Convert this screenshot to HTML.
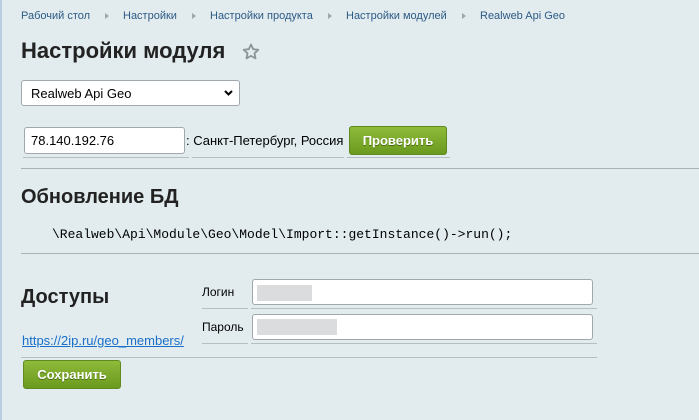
<!DOCTYPE html>
<html><head><meta charset="utf-8"><style>
body{margin:0;width:699px;height:420px;background:#e2ecef;font-family:"Liberation Sans",sans-serif;position:relative;overflow:hidden;color:#000}
.a{position:absolute}
.bc{top:10px;font-size:11px;color:#2c5a85}
.sep{top:13px;width:0;height:0;border-left:4px solid #9aa;border-top:3px solid transparent;border-bottom:3px solid transparent}
h1{position:absolute;margin:0;font-size:22px;font-weight:bold;color:#222}
.inp{background:#fff;border:1px solid #a0a8ad;border-radius:3px;box-sizing:border-box}
.btn{background:linear-gradient(#8fba3a,#6a9a1e);border:1px solid #5f8a1f;border-radius:3px;color:#fff;font-weight:bold;font-size:13px;text-align:center;box-sizing:border-box;text-shadow:0 1px 0 #4a6a10}
.hl{height:1px;background:#b5bfc3}
.blur{background:#dadcdd}
</style></head><body>
<div class="a" style="left:0;top:0;width:2px;height:420px;background:#b8cde0"></div>
<div class="a bc" style="left:21px">Рабочий стол</div><div class="a sep" style="left:105px"></div>
<div class="a bc" style="left:123px">Настройки</div><div class="a sep" style="left:192px"></div>
<div class="a bc" style="left:210px">Настройки продукта</div><div class="a sep" style="left:328px"></div>
<div class="a bc" style="left:346px">Настройки модулей</div><div class="a sep" style="left:462px"></div>
<div class="a bc" style="left:480px">Realweb Api Geo</div>
<h1 style="left:21px;top:38px">Настройки модуля</h1>
<svg class="a" style="left:242px;top:43px" width="18" height="18" viewBox="0 0 18 18"><path d="M9 1.5l2.2 4.7 5.1.6-3.8 3.5 1 5.1L9 12.9l-4.5 2.5 1-5.1L1.7 6.8l5.1-.6z" fill="none" stroke="#8a9499" stroke-width="1.8" stroke-linejoin="round"/></svg>
<div class="a inp" style="left:21px;top:80px;width:219px;height:26px;font-size:13px;padding:5px 9px">Realweb Api Geo<svg style="position:absolute;right:6px;top:9px" width="9" height="6" viewBox="0 0 9 6"><path d="M1 1l3.5 3.5L8 1" fill="none" stroke="#000" stroke-width="2"/></svg></div>
<div class="a inp" style="left:24px;top:127px;width:161px;height:27px;font-size:13px;padding:5px 6px">78.140.192.76</div>
<div class="a" style="left:186px;top:133px;font-size:13px">: Санкт-Петербург, Россия</div>
<div class="a btn" style="left:349px;top:126px;width:98px;height:29px;line-height:27px">Проверить</div>
<div class="a hl" style="left:23px;top:157px;width:166px"></div>
<div class="a hl" style="left:192px;top:157px;width:152px"></div>
<div class="a hl" style="left:347px;top:157px;width:103px"></div>
<div class="a hl" style="left:21px;top:168px;width:678px;background:#a8b2b6"></div>
<h1 style="left:21px;top:186px;font-size:20px">Обновление БД</h1>
<div class="a" style="left:52px;top:227px;font-family:'Liberation Mono',monospace;font-size:13px">\Realweb\Api\Module\Geo\Model\Import::getInstance()-&gt;run();</div>
<div class="a hl" style="left:21px;top:253px;width:678px;background:#a8b2b6"></div>
<h1 style="left:21px;top:286px;font-size:20px">Доступы</h1>
<div class="a" style="left:202px;top:285px;font-size:12px">Логин</div>
<div class="a inp" style="left:252px;top:279px;width:341px;height:26px"><div class="a blur" style="left:4px;top:5px;width:55px;height:16px"></div></div>
<div class="a hl" style="left:202px;top:308px;width:46px"></div><div class="a hl" style="left:251px;top:308px;width:346px"></div>
<div class="a" style="left:202px;top:320px;font-size:12px">Пароль</div>
<div class="a inp" style="left:252px;top:314px;width:341px;height:26px"><div class="a blur" style="left:4px;top:4px;width:80px;height:16px"></div></div>
<div class="a hl" style="left:202px;top:343px;width:46px"></div><div class="a hl" style="left:251px;top:343px;width:346px"></div>
<div class="a" style="left:22px;top:333px;font-size:13px;color:#1a6fc9;text-decoration:underline">https://2ip.ru/geo_members/</div>
<div class="a hl" style="left:21px;top:357px;width:576px"></div>
<div class="a btn" style="left:23px;top:360px;width:98px;height:29px;line-height:27px">Сохранить</div>
</body></html>
